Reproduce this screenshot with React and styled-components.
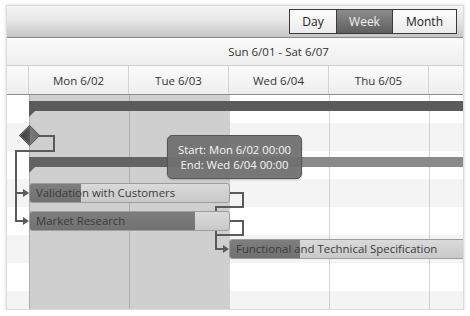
import React from 'react'
import styled, { createGlobalStyle } from 'styled-components'

// timeline: one day = 100px, Sunday 6/01 00:00 sits 78px left of the panel content
const DAY = 100
const ORIGIN = -78
const ROW = 28
const toX = d => ORIGIN + d * DAY

// only the columns fully inside the view get a caption
const days = ['', 'Mon 6/02', 'Tue 6/03', 'Wed 6/04', 'Thu 6/05', '', '']
const views = ['Day', 'Week', 'Month']

const rows = [
  { type: 'summary', start: 1, end: 6, progress: 1 },
  { type: 'milestone', start: 1 },
  { type: 'summary', start: 1, end: 6, progress: 0.3 },
  { type: 'task', name: 'Validation with Customers', start: 1, end: 3, progress: 0.255 },
  { type: 'task', name: 'Market Research', start: 1, end: 3, progress: 0.82 },
  { type: 'task', name: 'Functional and Technical Specification', start: 3, end: 6, progress: 0.233 },
  {},
  {}
]

const GlobalStyle = createGlobalStyle`
  html, body {
    margin: 0;
    background: #fff;
  }
  body {
    font-family: "Open Sans", "Noto Sans", sans-serif;
    font-size: 11.5px;
  }
`

const Panel = styled.div`
  margin: 5px 0 0 6px;
  width: 458px;
  height: 305px;
  box-sizing: border-box;
  border: 1px solid #dcdcdc;
  box-shadow: 0 0 3px rgba(0, 0, 0, 0.18);
  display: flex;
  flex-direction: column;
  overflow: hidden;
  background: #fff;
`

const Toolbar = styled.div`
  height: 32px;
  flex: none;
  display: flex;
  justify-content: flex-end;
  align-items: center;
  padding: 0 6px 0 0;
  box-sizing: border-box;
  border-bottom: 1px solid #8a8a8a;
  background: linear-gradient(#f5f5f5 0%, #e6e6e6 45%, #c6c6c6 100%);
`

const ButtonGroup = styled.div`
  display: flex;
`

const ViewButton = styled.div`
  height: 25px;
  box-sizing: border-box;
  min-width: ${p => p.$w}px;
  display: flex;
  align-items: center;
  justify-content: center;
  border: 1px solid #3a3a3a;
  margin-left: -1px;
  font-size: 12px;
  color: ${p => (p.$active ? '#f2f2f2' : '#222')};
  background: ${p =>
    p.$active
      ? 'linear-gradient(#8c8c8c, #5f5f5f)'
      : 'linear-gradient(#fdfdfd, #ebebeb)'};
`

const HeaderRow = styled.div`
  height: ${p => p.$h}px;
  flex: none;
  box-sizing: border-box;
  border-bottom: 1px solid ${p => p.$line};
  background: linear-gradient(#fbfbfb, #eeeeee);
  overflow: hidden;
`

const Track = styled.div`
  display: flex;
  height: 100%;
  margin-left: ${ORIGIN}px;
`

const HeaderCell = styled.div`
  flex: none;
  width: ${p => p.$w}px;
  box-sizing: border-box;
  display: flex;
  align-items: center;
  justify-content: center;
  color: #333;
  border-right: 1px solid ${p => p.$line || 'transparent'};
`

const Body = styled.div`
  flex: 1;
  position: relative;
  z-index: 0;
  overflow: hidden;
`

const Row = styled.div`
  height: ${ROW}px;
  position: relative;
  background: ${p => (p.$striped ? '#f4f4f4' : '#fff')};
`

const Highlight = styled.div`
  position: absolute;
  top: 0;
  bottom: 0;
  background: #cfcfcf;
`

const GridLines = styled.div`
  position: absolute;
  inset: 0;
  background-image: repeating-linear-gradient(
    to right,
    rgba(0, 0, 0, 0.16) 0 1px,
    transparent 1px ${DAY}px
  );
  background-position: ${ORIGIN + DAY}px 0;
`

const SummaryBar = styled.div`
  position: absolute;
  top: 6px;
  height: 10px;
  z-index: 2;
  background: #8a8a8a;

  &::after {
    content: '';
    position: absolute;
    left: 0;
    top: 10px;
    border-top: 6px solid ${p => p.$fill};
    border-right: 6px solid transparent;
  }
`

const SummaryFill = styled.div`
  height: 100%;
  background: ${p => p.$fill};
`

const TaskBar = styled.div`
  position: absolute;
  top: 4px;
  height: 20px;
  z-index: 2;
  box-sizing: border-box;
  border: 1px solid #9d9d9d;
  border-radius: 3px;
  background: linear-gradient(#dadada, #c9c9c9);
  overflow: hidden;
`

const TaskFill = styled.div`
  position: absolute;
  left: 0;
  top: 0;
  bottom: 0;
  background: linear-gradient(#7e7e7e, #717171);
`

const TaskLabel = styled.span`
  position: relative;
  display: block;
  padding-left: 6px;
  line-height: 18px;
  font-size: 11.4px;
  color: #3a3a3a;
  white-space: nowrap;
`

const Diamond = styled.div`
  position: absolute;
  top: 5px;
  width: 15px;
  height: 15px;
  z-index: 2;
  box-sizing: border-box;
  border: 1px solid #4a4a4a;
  transform: rotate(45deg);
  background: linear-gradient(45deg, #3c3c3c 0%, #555 50%, #7a7a7a 50%, #6a6a6a 100%);
`

const Links = styled.svg`
  position: absolute;
  left: 0;
  top: 0;
  z-index: 1;
  overflow: visible;
`

const Tooltip = styled.div`
  position: absolute;
  left: 160px;
  top: 40px;
  width: 135px;
  height: 44px;
  z-index: 3;
  box-sizing: border-box;
  border: 1px solid #565656;
  border-radius: 5px;
  background: rgba(112, 112, 112, 0.95);
  color: #f6f6f6;
  font-size: 11.3px;
  line-height: 15px;
  display: flex;
  flex-direction: column;
  align-items: center;
  justify-content: center;
  box-shadow: 0 1px 2px rgba(0, 0, 0, 0.2);
`

function Arrow({ x, y }) {
  return <polygon points={`${x - 6},${y - 4} ${x},${y} ${x - 6},${y + 4}`} fill="#5a5a5a" />
}

function RowContent({ item }) {
  if (item.type === 'summary') {
    const fill = item.progress === 1 ? '#5b5b5b' : '#636363'
    const width = (item.end - item.start) * DAY
    return (
      <SummaryBar $fill={fill} style={{ left: toX(item.start), width }}>
        <SummaryFill $fill={fill} style={{ width: width * item.progress }} />
      </SummaryBar>
    )
  }
  if (item.type === 'milestone') {
    return <Diamond style={{ left: toX(item.start) - 7.5 }} />
  }
  if (item.type === 'task') {
    const width = (item.end - item.start) * DAY + 1
    return (
      <TaskBar style={{ left: toX(item.start), width }}>
        <TaskFill style={{ width: width * item.progress }} />
        <TaskLabel>{item.name}</TaskLabel>
      </TaskBar>
    )
  }
  return null
}

export default function App() {
  return (
    <>
      <GlobalStyle />
      <Panel>
        <Toolbar>
          <ButtonGroup>
            {views.map((v, i) => (
              <ViewButton key={v} $active={v === 'Week'} $w={[48, 57, 65][i]}>
                {v}
              </ViewButton>
            ))}
          </ButtonGroup>
        </Toolbar>

        <HeaderRow $h={28} $line="#d0d0d0">
          <Track>
            <HeaderCell $w={DAY * 7}>Sun 6/01 - Sat 6/07</HeaderCell>
          </Track>
        </HeaderRow>

        <HeaderRow $h={29} $line="#8c8c8c">
          <Track>
            {days.map((d, i) => (
              <HeaderCell key={i} $w={DAY} $line="#d3d3d3">
                {d}
              </HeaderCell>
            ))}
          </Track>
        </HeaderRow>

        <Body>
          {rows.map((item, i) => (
            <Row key={i} $striped={i % 2 === 1}>
              <RowContent item={item} />
            </Row>
          ))}
          <Highlight style={{ left: toX(1), width: DAY * 2 }} />
          <GridLines />

          <Links width="456" height="215">
            <g fill="none" stroke="#5a5a5a" strokeWidth="2">
              <path d="M32 41 H47 V56 H9 V126 H17" />
              <path d="M9 98 H17" />
              <path d="M222 98 H236 V112 H209 V154 H217" />
              <path d="M222 126 H236 V140 H209" />
            </g>
            <Arrow x={22} y={98} />
            <Arrow x={22} y={126} />
            <Arrow x={222} y={154} />
          </Links>

          <Tooltip>
            <span>Start: Mon 6/02 00:00</span>
            <span>End: Wed 6/04 00:00</span>
          </Tooltip>
        </Body>
      </Panel>
    </>
  )
}
